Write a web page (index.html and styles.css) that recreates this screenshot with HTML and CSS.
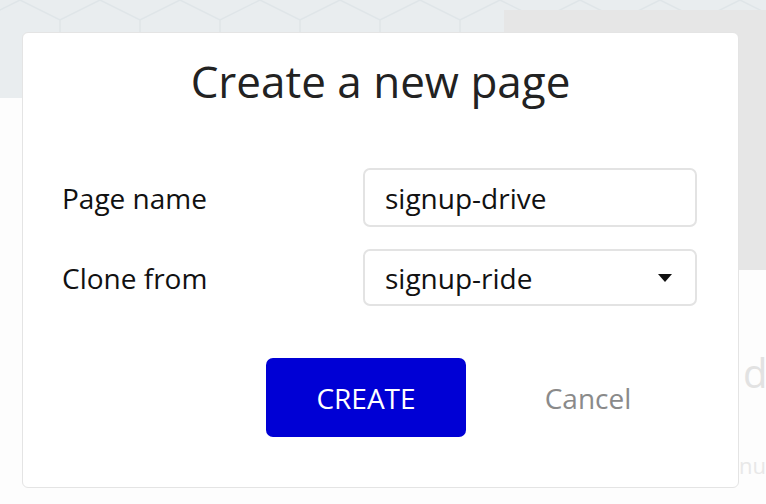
FILE: index.html
```html
<!DOCTYPE html>
<html>
<head>
<meta charset="utf-8">
<link rel="stylesheet" href="styles.css">
</head>
<body>
<div class="backdrop">
  <div class="top-band">
    <svg class="hex" width="766" height="98" viewBox="0 0 766 98">
      <g fill="none" stroke="#dfe5e8" stroke-width="1.5">
        <path d="M-20 20 L20 0 L60 20 L100 0 L140 20 L180 0 L220 20 L260 0 L300 20 L340 0 L380 20 L420 0 L460 20 L500 0 L540 20 L580 0 L620 20 L660 0 L700 20 L740 0 L780 20"/>
        <path d="M-20 20 L-20 70 M60 20 L60 70 M140 20 L140 70 M220 20 L220 70 M300 20 L300 70 M380 20 L380 70 M460 20 L460 70"/>
      </g>
    </svg>
  </div>
  <div class="side-panel"></div>
  <div class="ghost ghost-d">d</div>
  <div class="ghost ghost-nu">nu</div>
</div>

<div class="modal">
  <h1 class="title">Create a new page</h1>
  <div class="form">
    <label class="label">Page name</label>
    <div class="field">signup-drive</div>
    <label class="label">Clone from</label>
    <div class="field select">
      <span>signup-ride</span>
      <svg class="caret" width="14" height="8" viewBox="0 0 14 8"><path d="M0 0 H14 L7 8 Z" fill="#111"/></svg>
    </div>
  </div>
  <div class="actions">
    <button class="btn primary">CREATE</button>
    <button class="btn link">Cancel</button>
  </div>
</div>
</body>
</html>
```

FILE: styles.css
```css
html, body {
  margin: 0;
  padding: 0;
}
body {
  width: 766px;
  height: 504px;
  overflow: hidden;
  position: relative;
  background: #fdfdfd;
  font-family: "Open Sans", "Noto Sans", sans-serif;
}
.backdrop {
  position: absolute;
  inset: 0;
}
.top-band {
  height: 98px;
  background: #e9edef;
  overflow: hidden;
}
.hex {
  display: block;
}
.side-panel {
  position: absolute;
  left: 504px;
  top: 10px;
  width: 262px;
  height: 260px;
  background: #e6e6e6;
}
.ghost {
  position: absolute;
  white-space: nowrap;
}
.ghost-d {
  left: 743px;
  top: 345px;
  font-size: 40px;
  color: #e2e2e2;
}
.ghost-nu {
  left: 739px;
  top: 450px;
  font-size: 22px;
  color: #e8e8e8;
}
.modal {
  position: absolute;
  left: 22px;
  top: 32px;
  width: 715px;
  height: 454px;
  background: #fff;
  border: 1px solid #e4e4e4;
  border-radius: 6px;
}
.title {
  margin: 18px 0 0;
  text-align: center;
  font-size: 44px;
  font-weight: 400;
  line-height: 60px;
  color: #222;
}
.form {
  margin-top: 57px;
  padding: 0 41px 0 39px;
  display: grid;
  grid-template-columns: 1fr 334px;
  row-gap: 22px;
  align-items: center;
}
.label {
  font-size: 28px;
  color: #111;
}
.field {
  box-sizing: border-box;
  height: 59px;
  border: 2px solid #e3e3e3;
  border-radius: 7px;
  padding: 0 20px;
  font-size: 28px;
  color: #111;
  display: flex;
  align-items: center;
  justify-content: space-between;
}
.select {
  height: 57px;
}
.caret {
  margin-right: 3px;
}
.actions {
  margin-top: 52px;
  display: flex;
  justify-content: flex-end;
  gap: 22px;
  padding-right: 50px;
}
.btn {
  width: 200px;
  height: 79px;
  border: none;
  border-radius: 7px;
  font-family: "Open Sans", "Noto Sans", sans-serif;
  font-size: 28px;
  cursor: pointer;
}
.primary {
  background: #0000d5;
  color: #fff;
}
.link {
  background: transparent;
  color: #8a8a8a;
}
```
